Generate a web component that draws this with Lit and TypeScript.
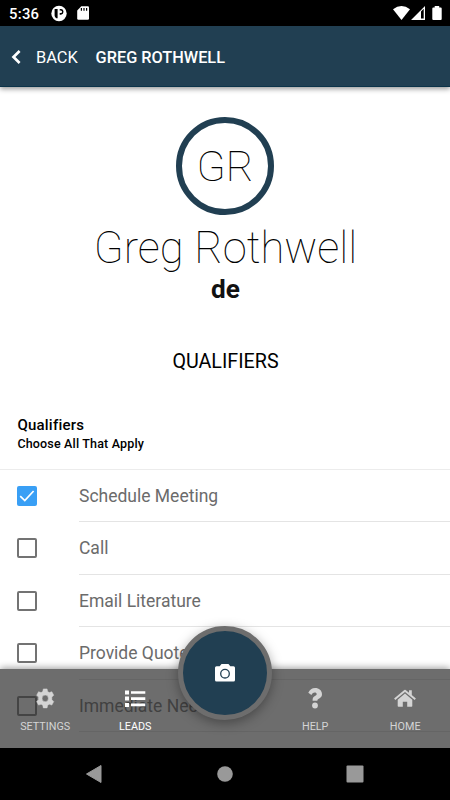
import { LitElement, html, css, svg } from "lit";
import { customElement, property } from "lit/decorators.js";
import { classMap } from "lit/directives/class-map.js";

@customElement("status-bar")
class StatusBar extends LitElement {
  static styles = css`
    :host { display: flex; align-items: center; height: 26px; flex: none; background: #000; color: #fff; padding: 0 7px 0 9px; }
    .time { font: 500 14.8px/26px Roboto, sans-serif; width: 42px; letter-spacing: 0.3px; padding-top: 1px; }
    .grow { flex: 1; }
    svg { display: block; flex: none; fill: #fff; }
  `;
  render() {
    return html`
      <span class="time">5:36</span>
      <svg width="42" height="26" viewBox="51 0 42 26">
        <circle cx="59" cy="13.500" r="7.700" />
        <path d="M54.600 9h3v9.200h-1.300q-1.700-1-1.700-2.700zM59.700 9h1.500q2.300.3 2.300 2.800t-2.500 2.900h-1.300v-1.600h1.200q1.200-.2 1.200-1.300t-1.200-1.300h-1.200z" fill="#000" />
        <path d="M81.300 6.200h6.500q1.200 0 1.200 1.200v11.200q0 1.200-1.200 1.200h-9.400q-1.200 0-1.200-1.200V10.400z" />
        <path d="M81.400 8v2.700M84 8v2.700M86.600 8v2.700" stroke="#000" stroke-width="1.200" />
      </svg>
      <span class="grow"></span>
      <svg width="50" height="26" viewBox="393 0 50 26">
        <path d="M393 9.300Q401.500 2.800 410 9.300L401.500 20z" />
        <path d="M425 6v14h-14zM421 11.500v7h2.700v-9.700z" fill-rule="evenodd" />
        <path d="M434.700 6h4.500v1.500h1.500q1 0 1 1V19q0 1-1 1h-7.400q-1 0-1-1V8.500q0-1 1-1h1.400z" />
      </svg>
    `;
  }
}

@customElement("qualifier-row")
class QualifierRow extends LitElement {
  @property() label = "";
  @property({ type: Boolean }) checked = false;
  static styles = css`
    :host { display: flex; height: 52.5px; flex: none; padding-left: 17.4px; box-sizing: border-box; }
    .box { box-sizing: border-box; width: 20px; height: 20px; margin: 16px 41.6px 0 0; border: 2px solid #737373; border-radius: 2px; flex: none; }
    .box.on { border: 0; background: #399ff5; }
    svg { display: block; }
    .label { flex: 1; border-bottom: 1px solid #e4e4e4; box-sizing: border-box; font: 400 17.5px/53px Roboto, sans-serif; color: #6b6b6b; white-space: nowrap; }
  `;
  render() {
    return html`
      <div class=${classMap({ box: true, on: this.checked })}>
        ${this.checked
          ? html`<svg width="20" height="20" viewBox="0 0 20 20"><path d="M3.200 10.200l4.600 4.400L16.600 5" fill="none" stroke="#fff" stroke-width="1.700" /></svg>`
          : ""}
      </div>
      <div class="label">${this.label}</div>
    `;
  }
}

const icons = {
  settings: svg`<path fill-rule="evenodd" transform="translate(.7 .4) scale(.95 1)" d="M8 .5h4l.6 2.700 1.700 1 2.700-.9 2 3.500-2 1.900v2.600l2 1.900-2 3.500-2.700-.9-1.700 1-.6 2.700H8l-.6-2.700-1.700-1-2.700.9-2-3.500 2-1.900V8.700L1 6.800l2-3.500 2.700.9 1.700-1zM10 6.700a3.300 3.300 0 1 0 0 6.600 3.300 3.300 0 0 0 0-6.600z" stroke-width=".5" stroke="currentColor" stroke-linejoin="round"/>`,
  leads: svg`<path d="M0 2.500h4v4H0zM0 8.600h4v4H0zM0 14.900h4v4H0zM6 3.200h14.300v2.600H6zM6 9.300h14.300v2.600H6zM6 15.600h14.300v2.600H6z"/>`,
  help: svg`<path d="M3.300 4.700C4.700 2 6.900.1 10.200.1c3.700 0 6.800 2.500 6.800 6.100 0 4.300-4.600 4.200-4.600 6.200v.4H7.600v-.7c0-4.200 4.100-4.200 4.100-5.800 0-1-.8-1.700-2-1.700-1.300 0-2.100.7-3.300 2.300z"/><circle cx="10" cy="17.500" r="2.900"/>`,
  home: svg`<path d="M-.9 10.500L9.300 2q.7-.6 1.400 0l3.300 2.700V2.300h2.800v4.800l4.100 3.400-1.200 1.500L10 4 .3 12z"/><path d="M10 5.600l7.300 6.100v6.300q0 .8-.8.8h-4.300v-5.100H7.800v5.100H3.500q-.8 0-.8-.8v-6.300z"/>`,
};

@customElement("tab-item")
class TabItem extends LitElement {
  @property() icon: keyof typeof icons = "home";
  @property() label = "";
  @property({ type: Boolean }) active = false;
  static styles = css`
    :host { display: flex; flex-direction: column; align-items: center; padding-top: 18.5px; }
    .tab { display: flex; flex-direction: column; align-items: center; color: #d4d4d4; gap: 11px; }
    .active { color: #fff; }
    svg { display: block; fill: currentColor; overflow: visible; }
    .label { font: 400 10.8px/16px Roboto, sans-serif; padding-left: 0.4px; }
  `;
  render() {
    return html`<div class=${classMap({ tab: true, active: this.active })}>
      <svg width="20" height="20" viewBox="0 0 20 20">${icons[this.icon]}</svg>
      <span class="label">${this.label}</span>
    </div>`;
  }
}

@customElement("app-root")
class AppRoot extends LitElement {
  static styles = css`
    :host { display: flex; flex-direction: column; position: relative; width: 450px; height: 800px; overflow: hidden; background: #fff; font-family: Roboto, sans-serif; color: #000; }
    header { display: flex; align-items: center; height: 61px; flex: none; box-sizing: border-box; background: #213f52; border-bottom: 1px solid #0b3349; color: #fff; box-shadow: 0 2px 5px rgba(0, 0, 0, 0.4); padding: 2px 0 0 11px; font-size: 16.4px; position: relative; }
    header svg { margin: -1px 15px 0 0; }
    .back { width: 59.6px; }
    .title { font-weight: 500; font-size: 16.3px; white-space: nowrap; }
    main { flex: 1; min-height: 0; overflow: hidden; display: flex; flex-direction: column; }
    .profile { display: flex; flex-direction: column; align-items: center; height: 310px; padding: 30px 0 0 1px; box-sizing: border-box; flex: none; }
    .avatar { width: 98px; height: 98px; box-sizing: border-box; border: 6px solid #213f52; margin-right: 1px; border-radius: 50%; display: flex; justify-content: center; align-items: center; font-weight: 100; font-size: 42.6px; color: #000; }
    .name { font-weight: 100; font-size: 43.6px; line-height: 52px; margin-top: 8px; white-space: nowrap; }
    .company { font-weight: 700; font-size: 26.2px; line-height: 30px; margin-top: -1px; color: #111; }
    .section { font-size: 19.7px; line-height: 24px; margin-top: 46px; }
    .heading { height: 72.5px; flex: none; box-sizing: border-box; border-bottom: 1px solid #ececec; padding: 19px 0 0 17.4px; font-weight: 500; }
    .q { font-size: 15px; line-height: 18px; letter-spacing: 0.22px; }
    .hint { font-size: 12.5px; line-height: 18px; margin-top: 1px; letter-spacing: 0.17px; }
    .tabs { position: absolute; left: 0; right: 0; top: 669px; height: 79px; box-sizing: border-box; display: grid; grid-template-columns: repeat(5, 1fr); background: rgba(48, 48, 48, 0.706); box-shadow: 0 -1px 7px rgba(0, 0, 0, 0.4); }
    .camera { position: absolute; left: 178px; top: 626px; width: 94px; height: 94px; box-sizing: border-box; border: 5px solid #6d6d6d; border-radius: 50%; background: #213f52; display: flex; align-items: center; justify-content: center; box-shadow: 0 3px 12px rgba(0, 0, 0, 0.35); }
    .system { height: 52px; flex: none; background: #000; display: flex; justify-content: space-between; align-items: center; padding: 0 86px 0 85px; box-sizing: border-box; }
  `;
  render() {
    return html`
      <status-bar></status-bar>
      <header>
        <svg width="10" height="16" viewBox="0 0 10 16"><path d="M8.600 2L2.500 8l6.100 6" fill="none" stroke="#fff" stroke-width="2.700" /></svg>
        <span class="back">BACK</span><span class="title">GREG ROTHWELL</span>
      </header>
      <main>
        <div class="profile">
          <div class="avatar">GR</div>
          <div class="name">Greg Rothwell</div>
          <div class="company">de</div>
          <div class="section">QUALIFIERS</div>
        </div>
        <div class="heading"><div class="q">Qualifiers</div><div class="hint">Choose All That Apply</div></div>
        <qualifier-row label="Schedule Meeting" checked></qualifier-row>
        <qualifier-row label="Call"></qualifier-row>
        <qualifier-row label="Email Literature"></qualifier-row>
        <qualifier-row label="Provide Quote"></qualifier-row>
        <qualifier-row label="Immediate Need"></qualifier-row>
      </main>
      <nav class="system">
        <svg width="18" height="20" viewBox="0 0 18 20"><path d="M1.500 10L16 1.500v17z" fill="#999" stroke="#999" stroke-linejoin="round" /></svg>
        <svg width="16" height="16" viewBox="0 0 16 16"><circle cx="8" cy="8" r="7.800" fill="#999" /></svg>
        <svg width="18" height="18" viewBox="0 0 18 18"><rect x=".5" y=".5" width="17" height="17" rx="1" fill="#999" /></svg>
      </nav>
      <div class="tabs">
        <tab-item icon="settings" label="SETTINGS"></tab-item>
        <tab-item icon="leads" label="LEADS" active></tab-item>
        <span></span>
        <tab-item icon="help" label="HELP"></tab-item>
        <tab-item icon="home" label="HOME"></tab-item>
      </div>
      <div class="camera">
        <svg width="22" height="20" viewBox="0 0 22 20"><path fill="#fff" d="M7.500 1h7l1.800 2.200h3.200q1.500 0 1.500 1.500v12.300q0 1.500-1.500 1.500h-17Q1 18.500 1 17V4.700q0-1.500 1.500-1.500h3.200z" /><circle cx="11" cy="10.700" r="4.300" fill="none" stroke="#213f52" stroke-width="1.300" /></svg>
      </div>
    `;
  }
}
